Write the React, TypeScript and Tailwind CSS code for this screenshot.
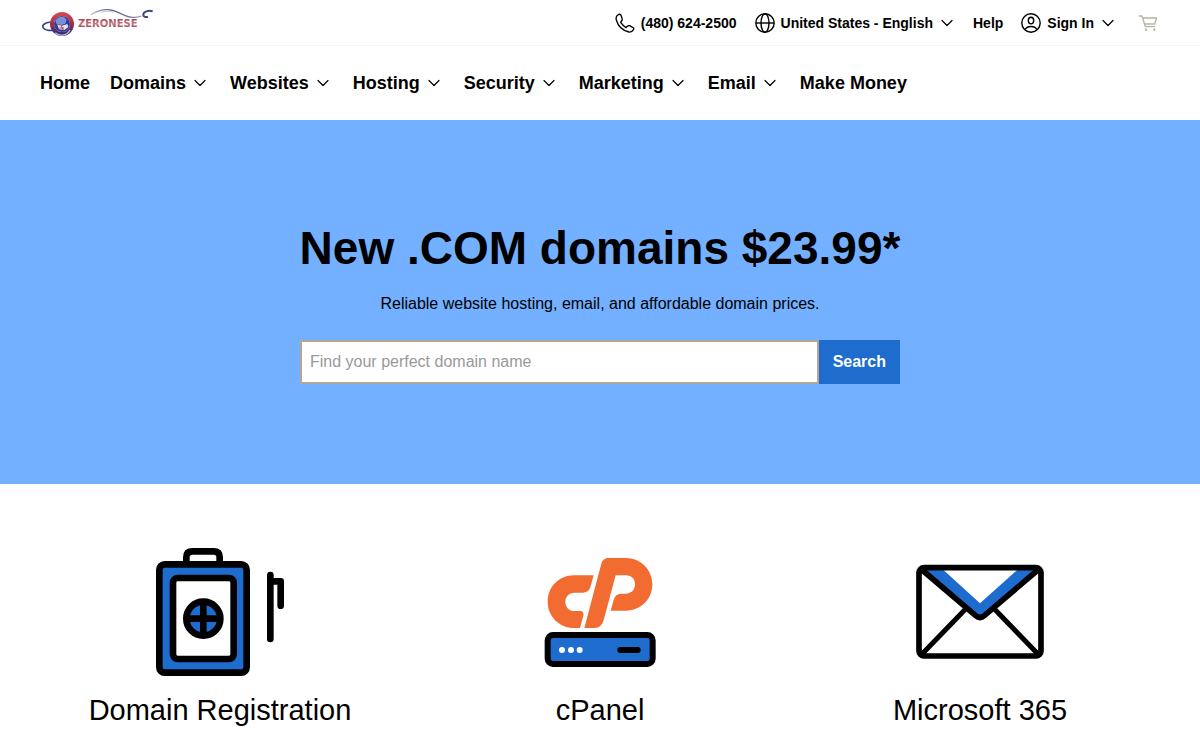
import type { ReactNode } from "react";

const navItems = [
  { label: "Home", menu: false },
  { label: "Domains", menu: true },
  { label: "Websites", menu: true },
  { label: "Hosting", menu: true },
  { label: "Security", menu: true },
  { label: "Marketing", menu: true },
  { label: "Email", menu: true },
  { label: "Make Money", menu: false },
];

function Chevron() {
  return (
    <svg
      width="12"
      height="12"
      viewBox="0 0 12 12"
      fill="none"
      stroke="currentColor"
      strokeWidth="1.2"
      strokeLinecap="round"
      strokeLinejoin="round"
      aria-hidden="true"
    >
      <path d="M1 3.5 6 8.5l5-5" />
    </svg>
  );
}

function PhoneIcon() {
  return (
    <svg width="20" height="20" viewBox="46 39 60 60" fill="none" stroke="currentColor" strokeWidth="4" strokeLinejoin="round" aria-hidden="true">
      <path d="M56 44C50 47 48 53 50 60c5 18 20 32 38 36 7 1 11-3 14-8 1-3 0-5-3-6l-9-5c-3-1-5 0-7 2l-4 4c-7-5-12-10-16-16l3-5c2-2 2-4 1-7l-3-9c-2-4-5-4-8-2Z" />
    </svg>
  );
}

function GlobeIcon() {
  return (
    <svg width="20" height="20" viewBox="0 0 20 20" fill="none" stroke="currentColor" strokeWidth="1.4" aria-hidden="true">
      <circle cx="10" cy="10" r="9.2" />
      <ellipse cx="10" cy="10" rx="4" ry="9.2" />
      <path d="M1 10h18" />
    </svg>
  );
}

function UserIcon() {
  return (
    <svg width="20" height="20" viewBox="0 0 20 20" fill="none" stroke="currentColor" strokeWidth="1.4" aria-hidden="true">
      <circle cx="10" cy="10" r="9.2" />
      <ellipse cx="10" cy="7.6" rx="2.7" ry="3.3" />
      <path d="M4 16.500c1.200-2 3.400-3 6-3s4.800 1 6 3" />
    </svg>
  );
}

function CartIcon() {
  return (
    <svg width="20" height="20" viewBox="713 39 60 60" fill="none" stroke="currentColor" strokeWidth="4" strokeLinejoin="round" aria-hidden="true">
      <path d="M715 48h10l10 32h29" />
      <path d="M728 54h41l-6 18h-30" />
      <circle cx="737" cy="89" r="3.500" fill="currentColor" stroke="none" />
      <circle cx="762" cy="89" r="3.500" fill="currentColor" stroke="none" />
    </svg>
  );
}

function Logo() {
  return (
    <svg width="116" height="32" viewBox="30 24 348 96" aria-label="Zeronese" role="img">
      <defs>
        <linearGradient id="ring" x1="0" y1="0" x2="0" y2="1">
          <stop offset="0" stopColor="#d6454d" />
          <stop offset="0.500" stopColor="#a52b4a" />
          <stop offset="1" stopColor="#2c2f80" />
        </linearGradient>
        <linearGradient id="letters" x1="0" y1="0" x2="0" y2="1">
          <stop offset="0" stopColor="#a53d4c" />
          <stop offset="0.500" stopColor="#c57781" />
          <stop offset="1" stopColor="#8c3043" />
        </linearGradient>
        <linearGradient id="swoosh" x1="0" y1="0" x2="1" y2="0">
          <stop offset="0" stopColor="#b9bdd0" />
          <stop offset="0.400" stopColor="#4f5a86" />
          <stop offset="1" stopColor="#8d94ae" />
        </linearGradient>
      </defs>
      <path d="M62 66C44 68 34 76 40 84c8 10 38 10 66 0" fill="none" stroke="#3a4a86" strokeWidth="5" />
      <circle cx="96" cy="72" r="30" fill="#fff" stroke="url(#ring)" strokeWidth="12" />
      <circle cx="96" cy="72" r="24" fill="#2f3d94" />
      <path d="M76 62c6-10 18-14 26-11l8 8-4 12-12 4-14-2Z" fill="#7d8fd0" />
      <path d="M82 74l14 3 16-5 3 9-12 9-16-2Z" fill="#e5e2ee" />
      <path d="M88 84h14M94 78l6 12" stroke="#b64052" strokeWidth="3" />
      <path d="M76 98c12 12 34 10 44-8" fill="none" stroke="#b9bdd0" strokeWidth="4" />
      <path d="M182 44c20-12 46-18 66-13 22 6 36 20 58 21 12 1 20-1 28-4" fill="none" stroke="url(#swoosh)" strokeWidth="4" />
      <path d="M212 38c14-6 28-6 38 0" fill="none" stroke="#c3c7d6" strokeWidth="3" />
      <path d="M368 34c-14-4-27 1-28 9-1 6 5 9 14 8" fill="none" stroke="#3e4878" strokeWidth="6" />
      <text x="144" y="82" fontFamily="'DejaVu Sans', sans-serif" fontWeight="700" fontSize="30" fill="url(#letters)">
        ZERONESE
      </text>
    </svg>
  );
}

function ClipboardArt() {
  return (
    <svg width="128" height="128" viewBox="48 24 384 384" fill="none" stroke="#000" strokeWidth="20" aria-hidden="true">
      <path d="M139 70V52q0-18 18-18h64q18 0 18 18v18" />
      <rect x="58" y="73" width="262" height="325" rx="16" fill="#1e6ccd" />
      <rect x="99" y="114" width="182" height="243" rx="14" fill="#fff" />
      <circle cx="190" cy="236" r="51" fill="#1e6ccd" />
      <path d="M190 186v100M140 236h100" />
      <path d="M391 105v192M391 124h31v73" strokeLinecap="round" strokeLinejoin="round" />
    </svg>
  );
}

function CpanelArt() {
  return (
    <svg width="128" height="128" viewBox="18 9 384 384" aria-hidden="true">
      <g fill="#f26c32">
        <path d="M191 91h-59C85 91 53 128 53 170c0 44 35 79 79 79h18l10-37c2-8-2-14-10-14h-17c-16 0-27-12-27-28 0-15 11-27 27-27h25c12 0 20-6 23-16Z" />
        <path d="M163 249 214 56c3-10 10-17 22-17h52c44 0 79 35 79 79 0 45-35 79-79 79h-46l9-32c4-13 11-19 21-19h16c16 0 27-12 27-28s-11-27-27-27h-31l-35 131c-5 18-14 27-28 27Z" />
      </g>
      <rect x="53" y="270" width="315" height="87" rx="16" fill="#1e6ccd" stroke="#000" strokeWidth="18" />
      <g fill="#fff">
        <circle cx="96" cy="315" r="9" />
        <circle cx="123" cy="315" r="9" />
        <circle cx="149" cy="315" r="9" />
      </g>
      <path d="M271 315h52" stroke="#000" strokeWidth="18" strokeLinecap="round" />
    </svg>
  );
}

function EnvelopeArt() {
  return (
    <svg width="128" height="128" viewBox="33 -21 384 384" fill="none" stroke="#000" strokeWidth="17" strokeLinejoin="round" aria-hidden="true">
      <path d="M56 42h56l113 103L340 42h54L225 188Z" fill="#1e6ccd" stroke="none" />
      <path d="M52 296 184 160M398 296 266 160" strokeWidth="15" />
      <path d="M48 42 212 182q13 11 26 0L402 42" />
      <rect x="42" y="38" width="366" height="265" rx="15" />
    </svg>
  );
}

function Feature({ title, children }: { title: string; children: ReactNode }) {
  return (
    <a href="#" className="flex flex-col items-center">
      {children}
      <h2 className="mt-4 text-center text-[29px] leading-9">{title}</h2>
    </a>
  );
}

export default function App() {
  return (
    <div className="bg-white font-['Liberation_Sans',Arial,sans-serif] text-black">
      <header>
        <div className="flex items-center justify-between border-b border-gray-100 pr-[42px] pl-10 text-sm font-bold">
          <a href="#" className="pt-2 pb-[5px]">
            <Logo />
          </a>
          <div className="flex items-center">
            <a href="#" className="flex items-center gap-[6px]">
              <PhoneIcon />
              (480) 624-2500
            </a>
            <button type="button" className="ml-[18px] flex items-center gap-[6px]">
              <GlobeIcon />
              United States - English
              <span className="ml-[2px]">
                <Chevron />
              </span>
            </button>
            <a href="#" className="ml-5">
              Help
            </a>
            <button type="button" className="ml-[18px] flex items-center gap-[6px]">
              <UserIcon />
              Sign In
              <span className="ml-[2px]">
                <Chevron />
              </span>
            </button>
            <button type="button" aria-label="Cart" className="ml-6 text-[#b7b3a2]">
              <CartIcon />
            </button>
          </div>
        </div>

        <nav className="flex items-center gap-5 px-10 py-6 text-lg leading-[26px] font-bold">
          {navItems.map((item) =>
            item.menu ? (
              <button key={item.label} type="button" className="flex items-center gap-2 pr-1">
                {item.label}
                <Chevron />
              </button>
            ) : (
              <a key={item.label} href="#">
                {item.label}
              </a>
            )
          )}
        </nav>
      </header>

      <main>
        <section className="flex flex-col items-center bg-[#73b0ff] px-5 py-[100px] text-center">
          <h1 className="text-[46px] leading-14 font-bold">New .COM domains $23.99*</h1>
          <p className="mt-4 text-base leading-6">Reliable website hosting, email, and affordable domain prices.</p>
          <form className="mt-6 flex w-full max-w-[600px]" onSubmit={(e) => e.preventDefault()}>
            <input
              type="text"
              aria-label="Find your perfect domain name"
              placeholder="Find your perfect domain name"
              className="h-11 min-w-0 flex-1 border-2 border-[#b5a595] bg-white px-2 text-base placeholder:text-[#999999]"
            />
            <button type="submit" className="h-11 bg-[#1e6ccd] px-[14px] text-base font-bold text-white">
              Search
            </button>
          </form>
        </section>

        <section className="grid grid-cols-3 px-[30px] pt-16">
          <Feature title="Domain Registration">
            <ClipboardArt />
          </Feature>
          <Feature title="cPanel">
            <CpanelArt />
          </Feature>
          <Feature title="Microsoft 365">
            <EnvelopeArt />
          </Feature>
        </section>
      </main>
    </div>
  );
}
